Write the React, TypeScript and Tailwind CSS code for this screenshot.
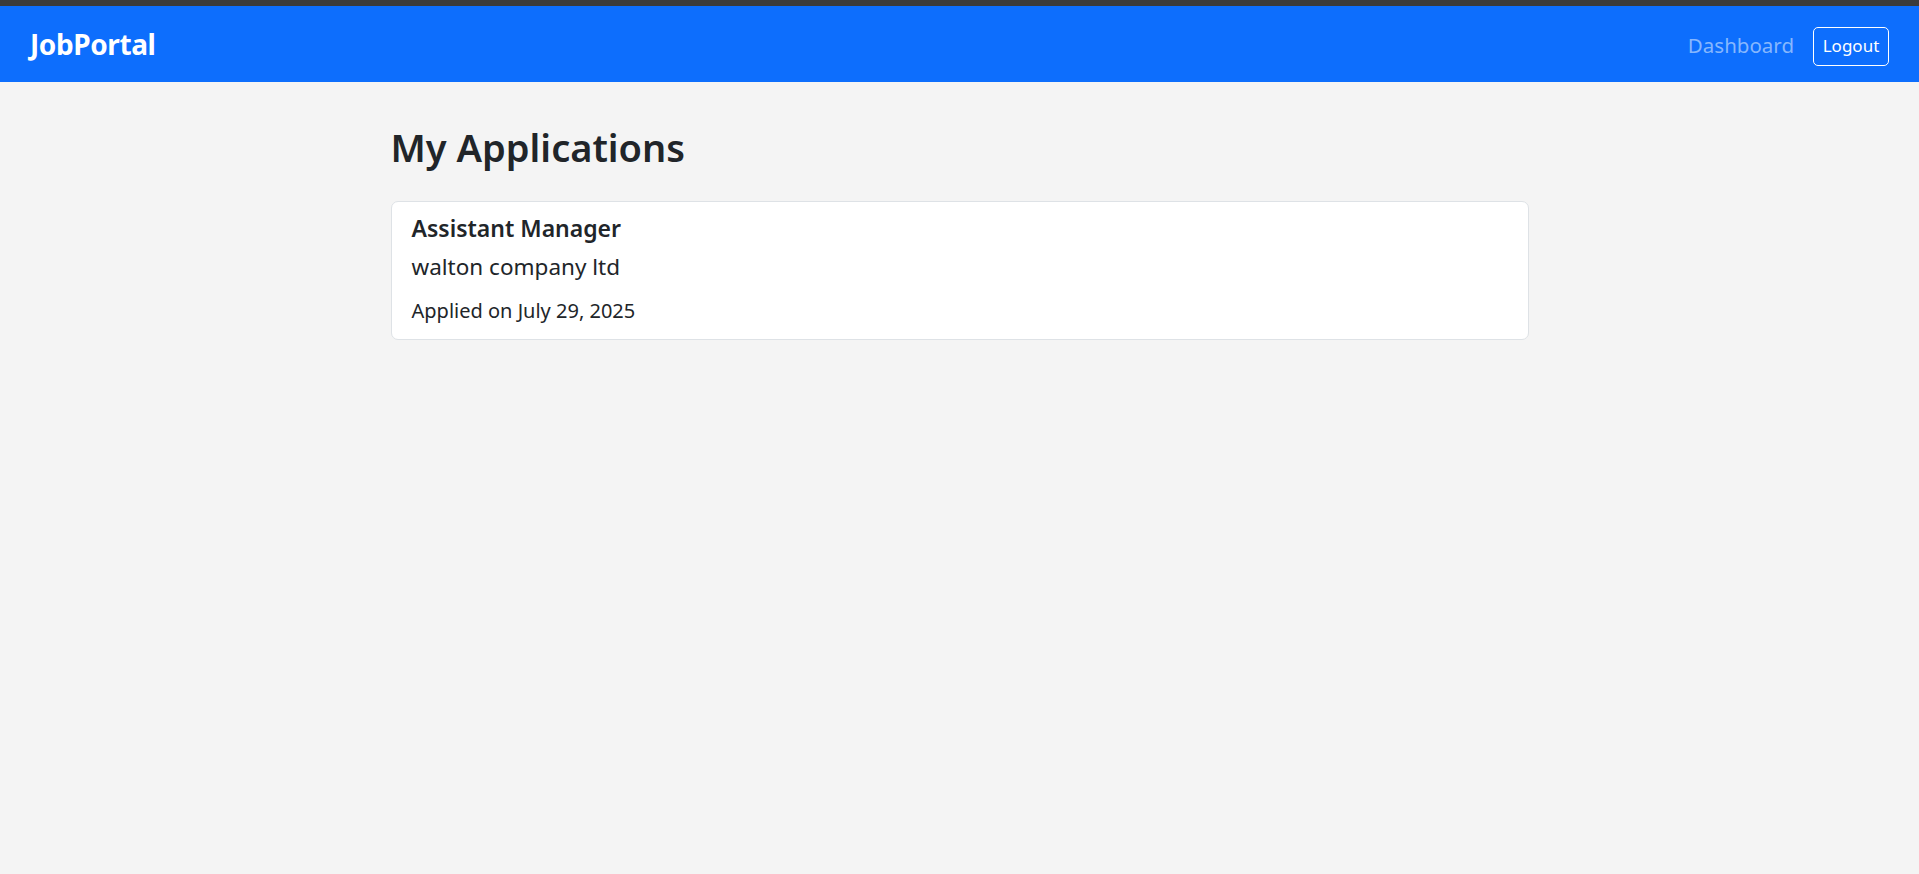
export default function App() {
  return (
    <div className="min-h-screen bg-[#f4f4f4] text-[#212529]" style={{ fontFamily: '"Noto Sans", "Open Sans", sans-serif' }}>
      {/* thin dark strip on top */}
      <div className="h-[6px] bg-[#3b3b3b]" />

      <nav className="h-[76px] bg-[#0d6efd] flex items-center justify-between px-[30px]">
        <a className="text-white font-bold text-[28px] leading-[34px] tracking-[-0.4px]">JobPortal</a>
        <div className="flex items-center gap-[19px]">
          <a className="text-[20.5px] leading-[28px] text-[#86b7fe] mt-[1px]">Dashboard</a>
          <button className="h-[39px] w-[76px] mt-[4px] rounded-[5px] border border-white text-white text-[17px] flex items-center justify-center">
            Logout
          </button>
        </div>
      </nav>

      <main className="w-[1138px] mx-auto pt-[42px]">
        <h2 className="text-[38px] font-semibold leading-[47px] mb-[30px]">My Applications</h2>

        <div className="bg-white border border-[#dee2e6] rounded-[7px] px-[20px] pt-[11px] pb-[14px]">
          <h5 className="text-[23px] font-semibold leading-[30px]">Assistant Manager</h5>
          <h6 className="text-[22.5px] leading-[30px] mt-[9px]">walton company ltd</h6>
          <p className="text-[20px] leading-[28px] mt-[15px]">Applied on July 29, 2025</p>
        </div>
      </main>
    </div>
  );
}
